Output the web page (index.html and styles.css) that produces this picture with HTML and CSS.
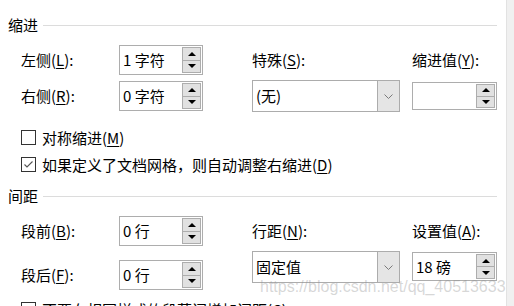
FILE: index.html
```html
<!DOCTYPE html>
<html lang="zh-CN">
<head>
<meta charset="utf-8">
<title>段落</title>
<link rel="stylesheet" href="styles.css">
</head>
<body>
<div class="window">
  <div class="content">
    <div class="group-title"><span>缩进</span><i class="rule"></i></div>
    <div class="grid indent">
      <div class="lbl c2 r1">左侧(<u>L</u>):</div>
      <div class="spin c3 r1"><span class="val">1 字符</span><span class="btns"><b class="btn"><i class="up"></i></b><b class="btn"><i class="down"></i></b></span></div>
      <div class="lbl c5 r1">特殊(<u>S</u>):</div>
      <div class="lbl c7 r1">缩进值(<u>Y</u>):</div>
      <div class="lbl c2 r2">右侧(<u>R</u>):</div>
      <div class="spin c3 r2 mid"><span class="val">0 字符</span><span class="btns"><b class="btn"><i class="up"></i></b><b class="btn"><i class="down"></i></b></span></div>
      <div class="select c5 r2"><span class="val">(无)</span><span class="drop"><svg width="9" height="5" viewBox="0 0 9 5"><polyline points="0.5,0.5 4.5,4.5 8.5,0.5" fill="none" stroke="#7a7a7a" stroke-width="1"/></svg></span></div>
      <div class="spin c7 r2 small"><span class="val"></span><span class="btns"><b class="btn"><i class="up"></i></b><b class="btn"><i class="down"></i></b></span></div>
    </div>
    <div class="checks">
      <label class="check"><span class="box"></span><span>对称缩进(<u>M</u>)</span></label>
      <label class="check"><span class="box on"><svg width="13" height="13" viewBox="0 0 13 13"><polyline points="2.5,6.5 5,9 10.5,3.5" fill="none" stroke="#555" stroke-width="1.1"/></svg></span><span>如果定义了文档网格，则自动调整右缩进(<u>D</u>)</span></label>
    </div>
    <div class="group-title second"><span>间距</span><i class="rule"></i></div>
    <div class="grid spacing">
      <div class="lbl c2 r1">段前(<u>B</u>):</div>
      <div class="spin c3 r1"><span class="val">0 行</span><span class="btns"><b class="btn"><i class="up"></i></b><b class="btn"><i class="down"></i></b></span></div>
      <div class="lbl c5 r1">行距(<u>N</u>):</div>
      <div class="lbl c7 r1">设置值(<u>A</u>):</div>
      <div class="lbl c2 r2">段后(<u>F</u>):</div>
      <div class="spin c3 r2"><span class="val">0 行</span><span class="btns"><b class="btn"><i class="up"></i></b><b class="btn"><i class="down"></i></b></span></div>
      <div class="select c5 r2 raised"><span class="val">固定值</span><span class="drop"><svg width="9" height="5" viewBox="0 0 9 5"><polyline points="0.5,0.5 4.5,4.5 8.5,0.5" fill="none" stroke="#7a7a7a" stroke-width="1"/></svg></span></div>
      <div class="spin c7 r2 raised2"><span class="val">18 磅</span><span class="btns"><b class="btn"><i class="up"></i></b><b class="btn"><i class="down"></i></b></span></div>
    </div>
    <div class="checks last">
      <label class="check"><span class="box"></span><span>不要在相同样式的段落间增加间距(<u>C</u>)</span></label>
    </div>
  </div>
  <div class="strip"></div>
  <div class="watermark">https://blog.csdn.net/qq_40513633</div>
</div>
</body>
</html>
```
FILE: styles.css
```css
html, body {
  margin: 0;
  padding: 0;
  background: #fff;
}
body {
  font-family: "Noto Sans CJK SC", "Noto Sans", sans-serif;
  font-size: 15px;
  color: #000;
  width: 514px;
  height: 306px;
  overflow: hidden;
}
u {
  text-decoration: underline;
  text-underline-offset: 2px;
}
.window {
  display: flex;
  height: 306px;
  position: relative;
}
.content {
  flex: 1;
  padding: 15px 9px 0 8px;
}
.strip {
  width: 7px;
  background: #f0f0f0;
  border-left: 1px solid #e2e2e2;
}
.group-title {
  display: flex;
  align-items: center;
  height: 20px;
  line-height: 20px;
}
.group-title .rule {
  flex: 1;
  height: 1px;
  background: #dcdcdc;
  margin-left: 5px;
}
.group-title.second {
  margin-top: 8px;
}
.grid {
  display: grid;
  grid-template-columns: 13px 98px 84px 49px 148px 12px 85px;
  margin-top: 10px;
}
.indent {
  grid-template-rows: 30px 32px;
  row-gap: 5px;
}
.spacing {
  grid-template-rows: 30px 30px;
  row-gap: 14px;
}
.c2 { grid-column: 2; }
.c3 { grid-column: 3; }
.c5 { grid-column: 5; }
.c7 { grid-column: 7; }
.r1 { grid-row: 1; }
.r2 { grid-row: 2; }
.lbl {
  align-self: center;
  line-height: 20px;
  white-space: nowrap;
}
.spin {
  box-sizing: border-box;
  height: 30px;
  border: 1px solid #adadad;
  background: #fff;
  display: flex;
  align-items: center;
  padding: 1px;
  align-self: center;
}
.spin.small {
  height: 28px;
}
.spin .val {
  flex: 1;
  padding-left: 2px;
  line-height: 20px;
  white-space: nowrap;
}
.btns {
  display: flex;
  flex-direction: column;
  width: 19px;
  height: 100%;
}
.btn {
  flex: 1;
  box-sizing: border-box;
  border: 1px solid #adadad;
  background: #e1e1e1;
  display: flex;
  align-items: center;
  justify-content: center;
}
.btn + .btn {
  border-top: 0;
}
.up {
  width: 0;
  height: 0;
  border-left: 4px solid transparent;
  border-right: 4px solid transparent;
  border-bottom: 4px solid #000;
}
.down {
  width: 0;
  height: 0;
  border-left: 4px solid transparent;
  border-right: 4px solid transparent;
  border-top: 4px solid #000;
}
.select {
  box-sizing: border-box;
  height: 32px;
  border: 1px solid #acacac;
  background: #fff;
  display: flex;
  align-items: stretch;
  align-self: center;
}
.select .val {
  flex: 1;
  padding-left: 3px;
  line-height: 30px;
}
.drop {
  width: 21px;
  background: #e5e5e5;
  border-left: 1px solid #acacac;
  display: flex;
  align-items: center;
  justify-content: center;
}
.raised {
  align-self: start;
  margin-top: -9px;
}
.raised2 {
  align-self: start;
  margin-top: -8px;
  height: 29px;
}
.checks {
  margin-top: 12px;
}
.checks.last {
  margin-top: 6px;
}
.check {
  display: flex;
  align-items: center;
  height: 27px;
  padding-left: 13px;
  gap: 6px;
  white-space: nowrap;
}
.box {
  box-sizing: border-box;
  width: 15px;
  height: 15px;
  border: 1px solid #333;
  background: #fff;
  display: flex;
  align-items: center;
  justify-content: center;
}
.watermark {
  position: absolute;
  left: 260px;
  top: 277px;
  font-family: "Liberation Sans", Arial, sans-serif;
  font-size: 16px;
  line-height: 20px;
  color: rgba(140, 140, 140, 0.35);
  white-space: nowrap;
  pointer-events: none;
}
```
